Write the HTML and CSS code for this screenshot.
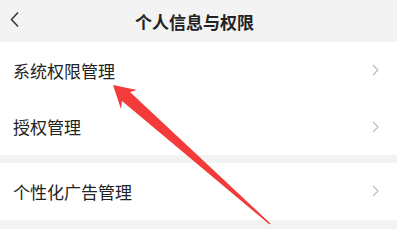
FILE: index.html
```html
<!DOCTYPE html>
<html lang="zh-CN">
<head>
    <meta charset="UTF-8">
    <meta name="viewport" content="width=device-width, initial-scale=1.0">
    <title>个人信息与权限</title>
    <link rel="stylesheet" href="styles.css">
</head>
<body>
    <div class="page">
        <div class="header">
            <svg class="back" width="12" height="18" viewBox="0 0 12 18">
                <polyline points="8,1.5 1.5,8.5 8,15.5" fill="none" stroke="#333" stroke-width="1.5"/>
            </svg>
            <h1>个人信息与权限</h1>
        </div>

        <div class="group">
            <div class="row">
                <span class="row-text">系统权限管理</span>
                <svg class="arrow" width="8" height="12" viewBox="0 0 8 12">
                    <polyline points="1,1 6,6 1,11" fill="none" stroke="#bbb" stroke-width="1.2"/>
                </svg>
            </div>
            <div class="row">
                <span class="row-text">授权管理</span>
                <svg class="arrow" width="8" height="12" viewBox="0 0 8 12">
                    <polyline points="1,1 6,6 1,11" fill="none" stroke="#bbb" stroke-width="1.2"/>
                </svg>
            </div>
        </div>

        <div class="group">
            <div class="row">
                <span class="row-text">个性化广告管理</span>
                <svg class="arrow" width="8" height="12" viewBox="0 0 8 12">
                    <polyline points="1,1 6,6 1,11" fill="none" stroke="#bbb" stroke-width="1.2"/>
                </svg>
            </div>
        </div>

        <!-- 红色标注箭头 -->
        <svg class="mark" width="397" height="237" viewBox="0 0 397 237">
            <polygon points="113,85 137,90 130,92 270.5,223.5 269.5,224.5 122,101 121,109" fill="#f43b3b"/>
        </svg>
    </div>
</body>
</html>
```

FILE: styles.css
```css
* {
    margin: 0;
    padding: 0;
    box-sizing: border-box;
}

body {
    background: #ffffff;
    font-family: "Noto Sans CJK SC", "Noto Sans", sans-serif;
    color: #222;
}

.page {
    position: relative;
    width: 397px;
    height: 237px;
    overflow: hidden;
}

.header {
    position: relative;
    height: 42px;
    background: #f3f3f3;
    display: flex;
    align-items: center;
    justify-content: center;
}

.back {
    position: absolute;
    left: 10px;
    top: 11px;
}

h1 {
    font-size: 17px;
    font-weight: 700;
    color: #222;
    margin-left: -8px;
}

.group {
    background: white;
    border-bottom: 8px solid #f3f3f3;
}

.group + .group {
    border-bottom-width: 9px;
}

.row {
    height: 56.5px;
    display: flex;
    align-items: center;
    justify-content: space-between;
    padding: 0 17px 0 13px;
}

.row-text {
    font-size: 17px;
    color: #222;
}

.mark {
    position: absolute;
    left: 0;
    top: 0;
    pointer-events: none;
}
```
